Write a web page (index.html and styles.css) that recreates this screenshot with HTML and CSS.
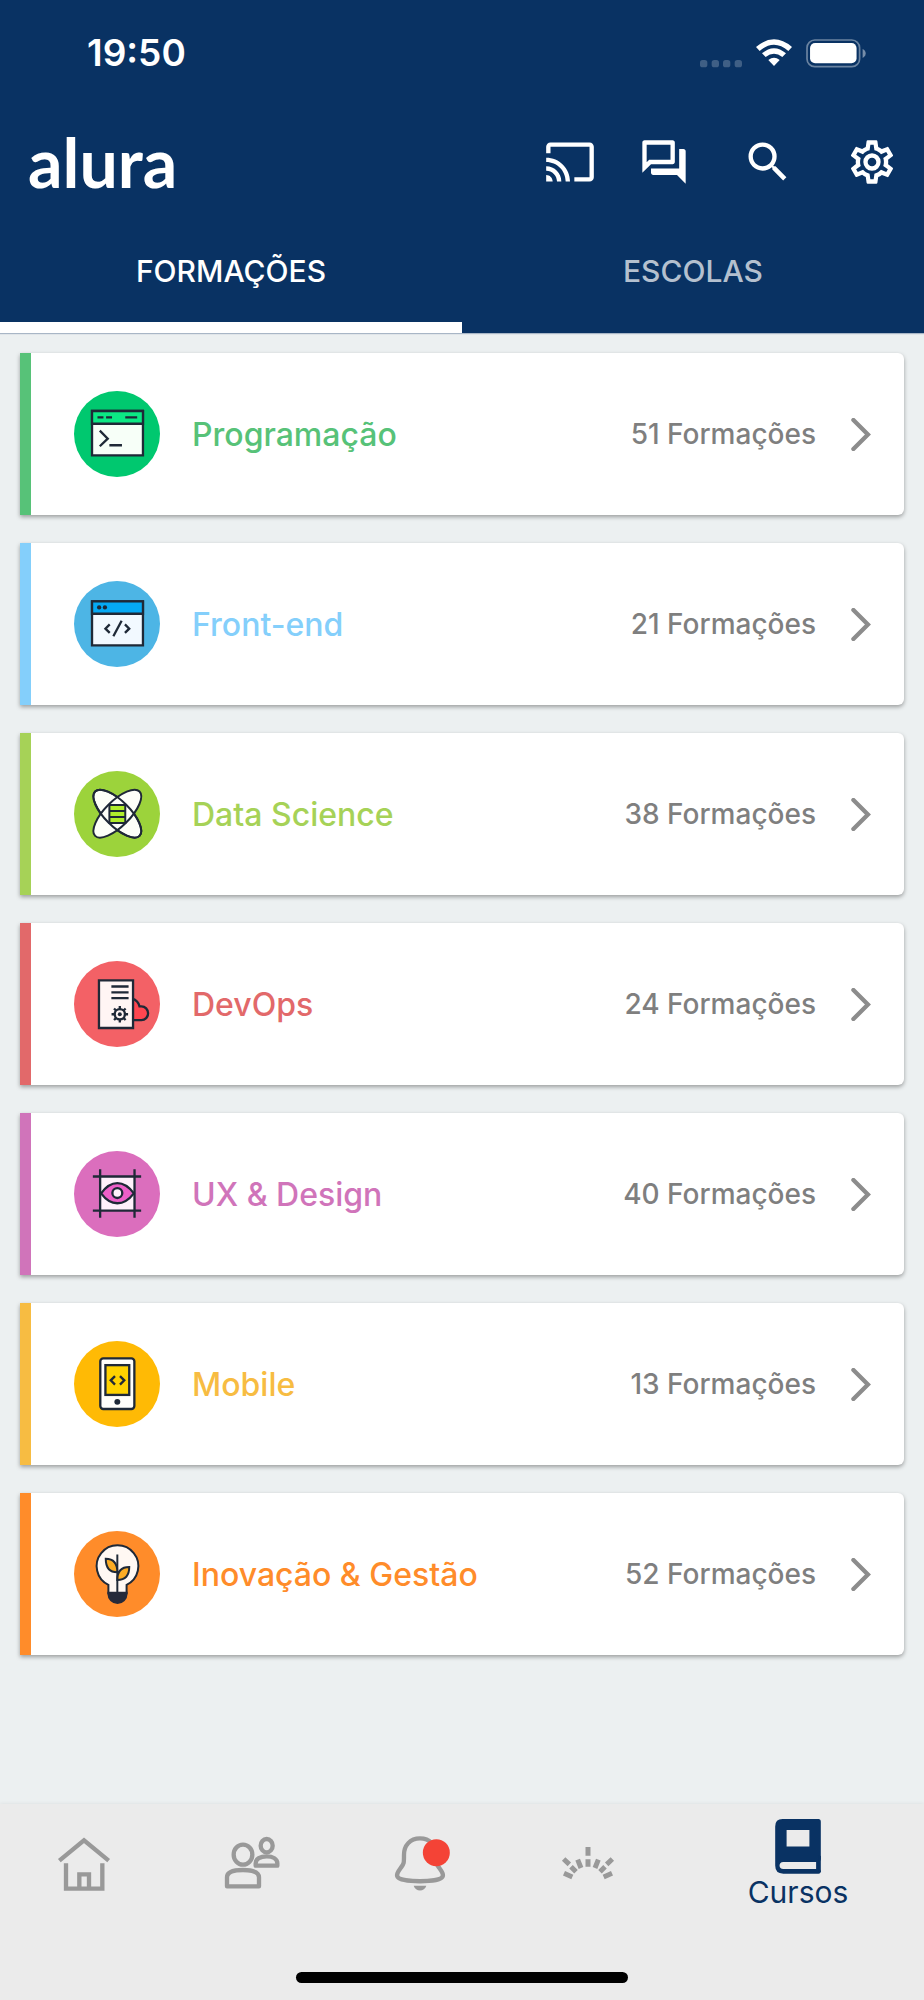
FILE: index.html
```html
<!DOCTYPE html>
<html lang="pt-BR">
<head>
<meta charset="utf-8">
<meta name="viewport" content="width=device-width, initial-scale=1">
<title>Alura - Cursos</title>
<link rel="stylesheet" href="styles.css">
</head>
<body>
<header class="header">
  <div class="status">
    <time class="status-time">19:50</time>
    <div class="status-icons">
      <svg class="signal" viewBox="0 0 126 24" aria-hidden="true"><rect width="22" height="22" rx="8"/><rect x="35" width="22" height="22" rx="8"/><rect x="69" width="22" height="22" rx="8"/><rect x="104" width="22" height="22" rx="8"/></svg>
      <svg class="wifi" viewBox="0 0 108 82" aria-hidden="true"><path d="M0 23Q54 -23 108 23L97 35Q54 -3 11 35Z"/><path d="M18 42Q54 11 90 42L79 53Q54 33 29 53Z"/><path d="M37 62Q54 49 71 62L54 80Z"/></svg>
      <svg class="battery" viewBox="0 0 178 86" aria-hidden="true"><rect class="battery-shell" x="3" y="3" width="156" height="79" rx="23"/><rect x="12" y="12" width="138" height="60" rx="15"/><path class="battery-tip" d="M168 30Q177 34 177 43T168 56Z"/></svg>
    </div>
  </div>
  <div class="toolbar">
    <h1 class="logo">alura</h1>
    <div class="actions">
      <button class="action action-cast" type="button" aria-label="Transmitir"><svg viewBox="0 0 24 24"><path d="M21 3H3c-1.100 0-2 .9-2 2v3h2V5h18v14h-7v2h7c1.100 0 2-.9 2-2V5c0-1.100-.9-2-2-2zM1 18v3h3c0-1.660-1.340-3-3-3zm0-4v2c2.760 0 5 2.240 5 5h2c0-3.870-3.130-7-7-7zm0-4v2c4.970 0 9 4.030 9 9h2c0-6.080-4.930-11-11-11z"/></svg></button>
      <button class="action" type="button" aria-label="Fórum"><svg viewBox="0 0 24 24"><path d="M15 4v7H5.170L4 12.170V4h11m1-2H3c-.55 0-1 .45-1 1v14l4-4h10c.55 0 1-.45 1-1V3c0-.55-.45-1-1-1zm5 4h-2v9H6v2c0 .55.45 1 1 1h11l4 4V7c0-.55-.45-1-1-1z"/></svg></button>
      <button class="action" type="button" aria-label="Buscar"><svg viewBox="0 0 24 24"><path d="M15.500 14h-.79l-.28-.27A6.471 6.471 0 0 0 16 9.500 6.500 6.500 0 1 0 9.500 16c1.610 0 3.090-.59 4.230-1.570l.27.28v.79l5 4.990L20.490 19l-4.990-5zm-6 0C7.010 14 5 11.990 5 9.500S7.010 5 9.500 5 14 7.010 14 9.500 11.990 14 9.500 14z"/></svg></button>
      <button class="action" type="button" aria-label="Configurações"><svg viewBox="0 0 24 24"><path d="M12,8A4,4 0 0,1 16,12A4,4 0 0,1 12,16A4,4 0 0,1 8,12A4,4 0 0,1 12,8M12,10A2,2 0 0,0 10,12A2,2 0 0,0 12,14A2,2 0 0,0 14,12A2,2 0 0,0 12,10M10,22C9.750,22 9.540,21.820 9.500,21.580L9.130,18.930C8.500,18.680 7.960,18.340 7.440,17.940L4.950,18.950C4.730,19.030 4.460,18.950 4.340,18.730L2.340,15.270C2.210,15.050 2.270,14.780 2.460,14.630L4.570,12.970L4.500,12L4.570,11L2.460,9.370C2.270,9.220 2.210,8.950 2.340,8.730L4.340,5.270C4.460,5.050 4.730,4.960 4.950,5.050L7.440,6.050C7.960,5.660 8.500,5.320 9.130,5.070L9.500,2.420C9.540,2.180 9.750,2 10,2H14C14.250,2 14.460,2.180 14.500,2.420L14.870,5.070C15.500,5.320 16.040,5.660 16.560,6.050L19.050,5.050C19.270,4.960 19.540,5.050 19.660,5.270L21.660,8.730C21.790,8.950 21.730,9.220 21.540,9.370L19.430,11L19.500,12L19.430,13L21.540,14.630C21.730,14.780 21.790,15.050 21.660,15.270L19.660,18.730C19.540,18.950 19.270,19.040 19.050,18.950L16.560,17.950C16.040,18.340 15.500,18.680 14.870,18.930L14.500,21.580C14.460,21.820 14.250,22 14,22H10M11.250,4L10.880,6.610C9.680,6.860 8.620,7.500 7.850,8.390L5.440,7.350L4.690,8.650L6.800,10.200C6.400,11.370 6.400,12.640 6.800,13.800L4.680,15.360L5.430,16.660L7.860,15.620C8.630,16.500 9.680,17.140 10.870,17.380L11.240,20H12.760L13.130,17.390C14.320,17.140 15.370,16.500 16.140,15.620L18.570,16.660L19.320,15.360L17.200,13.810C17.600,12.640 17.600,11.370 17.200,10.200L19.310,8.650L18.560,7.350L16.150,8.390C15.380,7.500 14.320,6.860 13.120,6.620L12.750,4H11.250Z"/></svg></button>
    </div>
  </div>
  <div class="tabs" role="tablist">
    <button class="tab tab-active" type="button" role="tab" aria-selected="true">FORMAÇÕES</button>
    <button class="tab" type="button" role="tab" aria-selected="false">ESCOLAS</button>
  </div>
</header>

<main class="content">
  <ul class="cards">
    <li><a class="card programacao" href="#programacao">
      <svg class="badge" viewBox="0 0 260 260" aria-hidden="true"><circle cx="130" cy="130" r="130" fill="#00c86f"/><g class="ink"><path fill="#f7fff8" d="M54.500 60.500H208.500V194.500H54.500Z"/><path fill="#0ce884" d="M54.500 60.500H208.500V99H54.500Z"/><path fill="none" d="M71 80H89M97 80H115M155 80H191M78 120L102 144L78 167M107 164H145"/></g></svg>
      <span class="card-name">Programação</span><span class="card-count">51 Formações</span>
      <svg class="chevron" viewBox="0 0 60 100" aria-hidden="true"><path d="M7 6L51 50L7 94"/></svg></a></li>
    <li><a class="card front" href="#front-end">
      <svg class="badge" viewBox="0 0 260 260" aria-hidden="true"><circle cx="130" cy="130" r="130" fill="#4db5e5"/><g class="ink"><path fill="#f2f9ff" d="M54.500 61.500H208.500V194.500H54.500Z"/><path fill="#05a9f4" d="M54.500 61.500H208.500V99H54.500Z"/><path fill="none" d="M108 131L95 144L108 157M144 120L119 167M154 131L167 144L154 157"/></g><g fill="#1f2937"><circle cx="76" cy="80" r="6.500"/><circle cx="93.500" cy="80" r="6.500"/></g></svg>
      <span class="card-name">Front-end</span><span class="card-count">21 Formações</span>
      <svg class="chevron" viewBox="0 0 60 100" aria-hidden="true"><path d="M7 6L51 50L7 94"/></svg></a></li>
    <li><a class="card data" href="#data-science">
      <svg class="badge" viewBox="0 0 260 260" aria-hidden="true"><circle cx="130" cy="130" r="130" fill="#9cd33b"/><g class="ink ink-fine"><g fill="#fdfff8"><ellipse cx="131" cy="129" rx="95" ry="38" transform="rotate(45 131 129)"/><ellipse cx="131" cy="129" rx="95" ry="38" transform="rotate(-45 131 129)"/></g><path fill="#b0ee2c" d="M107 103H155V157H107Z"/><path fill="none" d="M107 121H155M107 139H155"/><g fill="none"><ellipse cx="131" cy="129" rx="95" ry="38" transform="rotate(45 131 129)"/></g></g></svg>
      <span class="card-name">Data Science</span><span class="card-count">38 Formações</span>
      <svg class="chevron" viewBox="0 0 60 100" aria-hidden="true"><path d="M7 6L51 50L7 94"/></svg></a></li>
    <li><a class="card devops" href="#devops">
      <svg class="badge" viewBox="0 0 260 260" aria-hidden="true"><circle cx="130" cy="130" r="130" fill="#f36166"/><g class="ink"><path fill="#ff4650" d="M176 114Q194 120 198 137H204A20 21 0 0 1 204 179H176Z"/><path fill="#fff5f4" d="M75.500 58.500H178.500V202.500H75.500Z"/><path fill="none" d="M113 77H165M113 95H165M113 112H165"/><circle cx="138.500" cy="161" r="15.500" fill="none"/><path fill="none" d="M138.500 136V145M138.500 177V186M113.500 161H122M155 161H163.500M121 143.500L127 149.500M150 172.500L156 178.500M156 143.500L150 149.500M127 172.500L121 178.500"/></g><circle cx="138.500" cy="161" r="6" fill="#1f2937"/></svg>
      <span class="card-name">DevOps</span><span class="card-count">24 Formações</span>
      <svg class="chevron" viewBox="0 0 60 100" aria-hidden="true"><path d="M7 6L51 50L7 94"/></svg></a></li>
    <li><a class="card ux" href="#ux-design">
      <svg class="badge" viewBox="0 0 260 260" aria-hidden="true"><circle cx="130" cy="130" r="130" fill="#db6ebd"/><path fill="#fff1fb" d="M79 77H183V180H79Z"/><g class="ink"><path d="M79 55V202M183 55V202M57 77H203M57 180H203"/><path fill="#ed5fc8" d="M82 128Q104 97 131 97T181 128Q158 158 131 158T82 128Z"/><circle cx="131" cy="127" r="15" fill="#fff1fb"/></g></svg>
      <span class="card-name">UX &amp; Design</span><span class="card-count">40 Formações</span>
      <svg class="chevron" viewBox="0 0 60 100" aria-hidden="true"><path d="M7 6L51 50L7 94"/></svg></a></li>
    <li><a class="card mobile" href="#mobile">
      <svg class="badge" viewBox="0 0 260 260" aria-hidden="true"><circle cx="130" cy="130" r="130" fill="#ffba05"/><g class="ink"><rect x="79.500" y="52.500" width="103" height="153" rx="9" fill="#fffefa"/><rect x="95" y="73" width="72" height="90" fill="#ffd200"/><path fill="none" d="M124 106L111 119L124 132M139 106L152 119L139 132"/></g><circle cx="131" cy="184" r="9" fill="#1f2937"/></svg>
      <span class="card-name">Mobile</span><span class="card-count">13 Formações</span>
      <svg class="chevron" viewBox="0 0 60 100" aria-hidden="true"><path d="M7 6L51 50L7 94"/></svg></a></li>
    <li><a class="card inovacao" href="#inovacao-gestao">
      <svg class="badge" viewBox="0 0 260 260" aria-hidden="true"><circle cx="130" cy="130" r="130" fill="#ff8c2a"/><g class="ink ink-fine"><path fill="#fff8f3" d="M104 188V163A63 63 0 1 1 159 163V188Z"/><path d="M131 71V188"/><path fill="#fbab23" d="M96 84C120 84 131 98 131 125C108 125 96 110 96 84ZM167 109C142 109 131 122 131 148C156 148 167 133 167 109Z"/></g><path fill="#252a3a" d="M101 184H162V190A30.500 30.500 0 0 1 101 190Z"/></svg>
      <span class="card-name">Inovação &amp; Gestão</span><span class="card-count">52 Formações</span>
      <svg class="chevron" viewBox="0 0 60 100" aria-hidden="true"><path d="M7 6L51 50L7 94"/></svg></a></li>
  </ul>
</main>

<footer class="footer">
  <nav class="nav">
    <a class="nav-item" href="#inicio" aria-label="Início"><svg class="nav-icon" viewBox="0 0 180 180"><path d="M16 80L90 19L164 80M36 88V164H145V88M76 164V121H105V164"/></svg></a>
    <a class="nav-item" href="#comunidade" aria-label="Comunidade"><svg class="nav-icon" viewBox="0 0 180 180"><ellipse cx="63" cy="62" rx="28" ry="30"/><path stroke-linejoin="round" d="M15 157V130C15 115 35 108 63 108S111 115 111 130V157ZM101 95V88C101 75 115 67 134 67S166 75 166 88V95Z"/><ellipse cx="134" cy="35" rx="18" ry="20"/></svg></a>
    <a class="nav-item" href="#notificacoes" aria-label="Notificações"><svg class="nav-icon" viewBox="0 0 180 180"><path d="M90 13C60 13 42 35 42 62C42 90 42 88 32 102C24 113 18 122 23 129C35 146 145 146 157 129C162 122 156 113 148 102C138 88 138 90 138 62C138 35 120 13 90 13Z"/><path class="solid" d="M71 155H109C104 174 76 174 71 155Z"/><circle class="alert" cx="139" cy="56" r="40.500"/></svg></a>
    <a class="nav-item" href="#destaques" aria-label="Destaques"><svg class="nav-icon rays" viewBox="0 0 180 180"><path d="M90 39V65M90 76V98M17 75L34 91M39 98L54 113M59 77L69 102M18 118L43 129M163 75L146 91M141 98L126 113M121 77L111 102M162 118L137 129"/></svg></a>
    <a class="nav-item nav-current" href="#cursos" aria-current="page"><svg class="book" viewBox="0 0 136 164" aria-hidden="true"><path fill-rule="evenodd" d="M22 0H129Q136 0 136 8V120Q132 128 132 139T136 155Q136 163 129 163H24Q0 163 0 139V22Q0 0 22 0ZM34 33V82H102V33ZM24 128Q13 129 13 139T24 149H122V128Z"/><path d="M128 110H136V158H128Z"/></svg><span>Cursos</span></a>
  </nav>
  <div class="home-bar"></div>
</footer>
</body>
</html>
```
FILE: styles.css
```css
* {
  box-sizing: border-box;
}

body {
  margin: 0;
  min-height: 100vh;
  display: flex;
  flex-direction: column;
  background: #ecf0f1;
  font-family: Inter, "Liberation Sans", sans-serif;
}

svg {
  display: block;
  flex: none;
}

button {
  margin: 0;
  padding: 0;
  border: 0;
  background: none;
  color: inherit;
  font: inherit;
}

a {
  color: inherit;
  text-decoration: none;
}

.header {
  background: #093263;
  color: #fff;
  box-shadow: 0 1px 1px rgba(9, 50, 99, 0.3);
}

.status {
  display: flex;
  justify-content: space-between;
  align-items: center;
  height: 106px;
  padding: 0 58px 0 87px;
}

.status-time {
  font-size: 37px;
  font-weight: 600;
  line-height: 44px;
}

.status-icons {
  display: flex;
  align-items: center;
  gap: 14px;
  fill: #fff;
}

.signal {
  width: 42px;
  height: 8px;
  align-self: flex-end;
  opacity: 0.22;
}

.wifi {
  width: 36px;
  height: 28px;
}

.battery {
  width: 60px;
  height: 29px;
}

.battery-shell {
  fill: none;
  stroke: #fff;
  stroke-width: 5;
  opacity: 0.4;
}

.battery-tip {
  opacity: 0.45;
}

.toolbar {
  display: flex;
  justify-content: space-between;
  align-items: center;
  height: 112px;
  padding: 0 26px 0 28px;
}

.logo {
  margin: 0;
  font-family: Lato, sans-serif;
  font-size: 68px;
  font-weight: 700;
  line-height: 80px;
}

.actions {
  display: flex;
  gap: 52px;
}

.action svg {
  width: 52px;
  height: 52px;
  fill: #fff;
}

.action-cast {
  margin-right: -10px;
}

.tabs {
  display: flex;
}

.tab {
  flex: 1;
  height: 115px;
  padding-top: 2px;
  border-bottom: 11px solid transparent;
  color: #b4c0cf;
  font-size: 30px;
  font-weight: 500;
}

.tab-active {
  border-color: #fff;
  color: #fff;
}

.content {
  flex: 1;
  padding: 20px;
}

.cards {
  display: flex;
  flex-direction: column;
  gap: 28px;
  margin: 0;
  padding: 0;
  list-style: none;
}

.card {
  display: flex;
  align-items: center;
  min-height: 162px;
  padding: 0 33px 0 43px;
  border-left: 11px solid;
  border-radius: 0 6px 6px 0;
  background: #fff;
  box-shadow: 0 2px 4px rgba(0, 0, 0, 0.35);
}

.badge {
  width: 86px;
  height: 86px;
}

.ink {
  stroke: #1f2937;
  stroke-width: 7;
}

.ink-fine {
  stroke-width: 6;
}

.card-name {
  flex: 1;
  padding-left: 32px;
  font-size: 32px;
  font-weight: 500;
}

.card-count {
  color: #7f7f7f;
  font-size: 28px;
  font-weight: 500;
}

.chevron {
  width: 20px;
  height: 33px;
  margin-left: 35px;
  fill: none;
  stroke: #8c8c8c;
  stroke-width: 13;
  stroke-linecap: round;
}

.programacao { border-color: #57c278; color: #57c278; }
.front { border-color: #84cffb; color: #84cffb; }
.data { border-color: #a6d257; color: #a6d257; }
.devops { border-color: #e2696a; color: #e2696a; }
.ux { border-color: #d074ba; color: #d074ba; }
.mobile { border-color: #f7bc42; color: #f7bc42; }
.inovacao { border-color: #ff8c2a; color: #ff8c2a; }

.footer {
  padding-bottom: 17px;
  background: #ebebeb;
  box-shadow: 0 -1px 3px rgba(0, 0, 0, 0.05);
}

.nav {
  display: flex;
}

.nav-item {
  flex: 2;
  display: flex;
  flex-direction: column;
  align-items: center;
  justify-content: center;
  height: 120px;
}

.nav-current {
  flex: 3;
  color: #093263;
  font-size: 30px;
  line-height: 36px;
}

.nav-icon {
  width: 60px;
  height: 60px;
  fill: none;
  stroke: #999;
  stroke-width: 13;
}

.rays {
  stroke-width: 15;
}

.solid {
  fill: #999;
  stroke: none;
}

.alert {
  fill: #f44336;
  stroke: none;
}

.book {
  width: 46px;
  height: 55px;
  fill: #093263;
}

.home-bar {
  width: 36%;
  height: 11px;
  margin: 48px auto 0;
  border-radius: 6px;
  background: #000;
}
```
